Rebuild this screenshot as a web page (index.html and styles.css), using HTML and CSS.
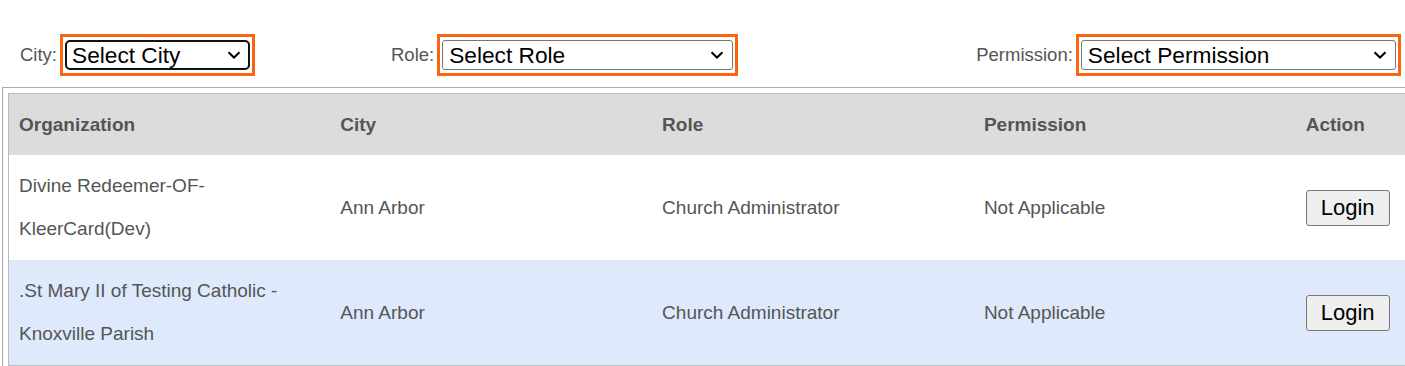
FILE: index.html
```html
<!DOCTYPE html>
<html lang="en">
<head>
  <meta charset="UTF-8" />
  <meta name="viewport" content="width=device-width, initial-scale=1.0"/>
  <title>Select Organization</title>
  <link rel="stylesheet" href="styles.css">
</head>
<body>
  <div class="filters">
    <label class="filter filter-city">
      City:
      <span class="mark">
        <span class="select-box">
          <select class="select select-city is-focused">
            <option>Select City</option>
          </select>
          <svg class="chevron" width="14" height="8" viewBox="0 0 14 8"><path d="M1.5 1.2 L7 6.5 L12.5 1.2" /></svg>
        </span>
      </span>
    </label>

    <label class="filter filter-role">
      Role:
      <span class="mark">
        <span class="select-box">
          <select class="select select-role">
            <option>Select Role</option>
          </select>
          <svg class="chevron" width="14" height="8" viewBox="0 0 14 8"><path d="M1.5 1.2 L7 6.5 L12.5 1.2" /></svg>
        </span>
      </span>
    </label>

    <label class="filter filter-permission">
      Permission:
      <span class="mark">
        <span class="select-box">
          <select class="select select-permission">
            <option>Select Permission</option>
          </select>
          <svg class="chevron" width="14" height="8" viewBox="0 0 14 8"><path d="M1.5 1.2 L7 6.5 L12.5 1.2" /></svg>
        </span>
      </span>
    </label>
  </div>

  <div class="table-wrap">
    <table class="org-table">
      <thead>
        <tr>
          <th>Organization</th>
          <th>City</th>
          <th>Role</th>
          <th>Permission</th>
          <th>Action</th>
        </tr>
      </thead>
      <tbody>
        <tr>
          <td>Divine Redeemer-OF-KleerCard(Dev)</td>
          <td>Ann Arbor</td>
          <td>Church Administrator</td>
          <td>Not Applicable</td>
          <td><button type="button" class="login-btn">Login</button></td>
        </tr>
        <tr class="row-alt">
          <td>.St Mary II of Testing Catholic - Knoxville Parish</td>
          <td>Ann Arbor</td>
          <td>Church Administrator</td>
          <td>Not Applicable</td>
          <td><button type="button" class="login-btn">Login</button></td>
        </tr>
      </tbody>
    </table>
  </div>
</body>
</html>
```

FILE: styles.css
```css
* {
  box-sizing: border-box;
}

html, body {
  overflow: hidden;
}

body {
  margin: 0;
  font-family: 'Liberation Sans', Arial, sans-serif;
  color: #555;
  background: #fff;
}

/* filter bar */
.filters {
  display: flex;
  align-items: center;
  padding: 34px 0 0 20px;
  width: 1500px;
}

.filter {
  flex-shrink: 0;
  display: flex;
  align-items: center;
  gap: 3px;
  font-size: 18.5px;
  color: #555;
}

.filter-role {
  margin-left: 136px;
}

.filter-permission {
  margin-left: 238px;
}

.mark {
  display: inline-flex;
  flex-shrink: 0;
  border: 3px solid #fa640e;
  padding: 3px 2px;
}

.select-box {
  position: relative;
  display: inline-flex;
}

.select {
  appearance: none;
  -webkit-appearance: none;
  flex-shrink: 0;
  height: 30px;
  padding: 0 24px 0 6px;
  font-family: 'Liberation Sans', Arial, sans-serif;
  font-size: 22.7px;
  color: #000;
  background: #fff;
  border: 1px solid #767676;
  border-radius: 3px;
}

.select-city {
  width: 185px;
}

.select-role {
  width: 291px;
}

.select-permission {
  width: 315px;
}

.is-focused {
  border: 2px solid #111;
  border-radius: 5px;
  padding-left: 5px;
}

.chevron {
  position: absolute;
  right: 9px;
  top: 11px;
  pointer-events: none;
}

.chevron path {
  fill: none;
  stroke: #000;
  stroke-width: 2;
}

/* table */
.table-wrap {
  margin: 11px 0 0 2px;
  width: 1650px;
  border: 1px solid #aaa;
  border-right: none;
  padding: 5px 0 0 5px;
}

.org-table {
  width: 1610px;
  table-layout: fixed;
  border-collapse: collapse;
  border: 1px solid #bbb;
  font-size: 19px;
}

.org-table th,
.org-table td {
  text-align: left;
  vertical-align: middle;
  padding: 9px 10px;
  line-height: 43px;
}

.org-table th {
  background: #dcdcdc;
  font-weight: bold;
  color: #555;
}

.org-table td {
  padding-bottom: 10px;
  color: #555;
}

.row-alt td {
  background: #dee9fc;
}

.login-btn {
  height: 36px;
  padding: 0 14px;
  font-family: 'Liberation Sans', Arial, sans-serif;
  font-size: 22px;
  line-height: normal;
  color: #000;
  background: #efefef;
  border: 1px solid #767676;
  border-radius: 3px;
  vertical-align: middle;
}
```
